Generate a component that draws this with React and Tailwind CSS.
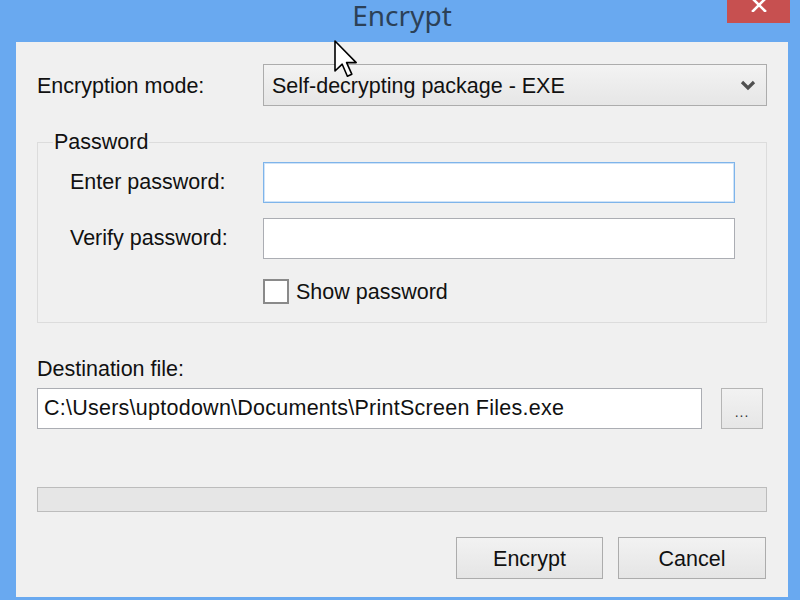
import React from 'react';

const font = { fontFamily: '"Liberation Sans", Arial, sans-serif' };

const TextBox = ({ focused, value, className = '' }) => (
  <div
    className={`h-[41px] bg-white flex items-center px-[6px] border ${
      focused ? 'border-[#7eb4ea] ring-1 ring-inset ring-[#cfe3f8]' : 'border-[#abadb3]'
    } ${className}`}
  >
    {value && <span className="text-[#111] whitespace-nowrap tracking-[0.25px]">{value}</span>}
  </div>
);

const Button = ({ label, className = '' }) => (
  <button
    className={`h-[42px] border border-[#acacac] bg-gradient-to-b from-[#f2f2f2] to-[#e5e5e5] text-[#111] flex items-center justify-center pt-[3px] ${className}`}
  >
    {label}
  </button>
);

export default function App() {
  return (
    <div className="relative w-[800px] h-[600px] overflow-hidden bg-[#69a9f0] flex flex-col text-[21.5px]" style={font}>
      {/* title bar */}
      <div className="relative h-[42px] shrink-0 flex items-start justify-center">
        <span
          className="text-[28px] leading-[30px] text-[#2c4157] ml-[4px]"
          style={{ fontFamily: '"Noto Sans", "Open Sans", sans-serif' }}
        >
          Encrypt
        </span>
        <div className="absolute top-0 right-[10px] w-[63px] h-[23px] bg-[#c75050] flex justify-center">
          <svg width="18" height="14" viewBox="0 0 18 14" className="mt-[-2px]">
            <path d="M3 1 L15 13 M15 1 L3 13" stroke="#fff" strokeWidth="2.6" strokeLinecap="square" />
          </svg>
        </div>
      </div>

      {/* client area */}
      <div className="flex-1 ml-[16px] mr-[12px] mb-[3px] bg-[#f0f0f0] px-[21px] pt-[22px] flex flex-col">
        <div className="flex items-center h-[42px]">
          <span className="w-[226px] text-[#111] pt-[3px]">Encryption mode:</span>
          <div className="flex-1 h-[42px] border border-[#acacac] bg-gradient-to-b from-[#f3f3f3] to-[#e6e6e6] flex items-center pl-[8px] pr-[10px]">
            <span className="flex-1 text-[#111] pt-[3px]">Self-decrypting package - EXE</span>
            <svg width="16" height="11" viewBox="0 0 16 11">
              <path d="M2 2 L8 8 L14 2" fill="none" stroke="#505050" strokeWidth="3.2" />
            </svg>
          </div>
        </div>

        <fieldset className="mt-[24px] border border-[#dcdcdc] pl-[32px] pr-[31px] pt-[8px] pb-[18px]">
          <legend className="ml-[-17px] px-[1px] leading-[24px] text-[#111]">Password</legend>
          <div className="flex items-center">
            <span className="w-[193px] text-[#111]">Enter password:</span>
            <TextBox focused className="flex-1" />
          </div>
          <div className="flex items-center mt-[15px]">
            <span className="w-[193px] text-[#111]">Verify password:</span>
            <TextBox className="flex-1" />
          </div>
          <div className="flex items-center mt-[20px] ml-[193px] h-[25px]">
            <div className="w-[26px] h-[25px] border-2 border-[#8a8a8a] bg-white" />
            <span className="ml-[7px] text-[#111] pt-[2px]">Show password</span>
          </div>
        </fieldset>

        <div className="mt-[34px] leading-[24px] text-[#111]">Destination file:</div>
        <div className="flex mt-[7px]">
          <TextBox className="flex-1" value="C:\Users\uptodown\Documents\PrintScreen Files.exe" />
          <button className="ml-[19px] mr-[4px] w-[42px] h-[41px] border border-[#b5b5b5] bg-gradient-to-b from-[#f2f2f2] to-[#e6e6e6] flex items-end justify-center pb-[9px]">
            <span className="text-[14px] leading-[14px] tracking-[1px] text-[#333]">...</span>
          </button>
        </div>

        <div className="mt-[58px] h-[25px] border border-[#bcbcbc] bg-[#e6e6e6]" />

        <div className="flex justify-end mt-[25px] mr-[1px] gap-[15px]">
          <Button label="Encrypt" className="w-[147px]" />
          <Button label="Cancel" className="w-[148px]" />
        </div>
      </div>

      {/* mouse pointer */}
      <svg className="absolute left-[333px] top-[39px]" width="26" height="40" viewBox="0 0 13 20">
        <path
          d="M1 1 L1 16 L4.6 12.6 L7.2 18.6 L9.4 17.6 L6.8 11.8 L11.6 11.8 Z"
          fill="#fff"
          stroke="#000"
          strokeWidth="0.8"
          strokeLinejoin="round"
        />
      </svg>
    </div>
  );
}
